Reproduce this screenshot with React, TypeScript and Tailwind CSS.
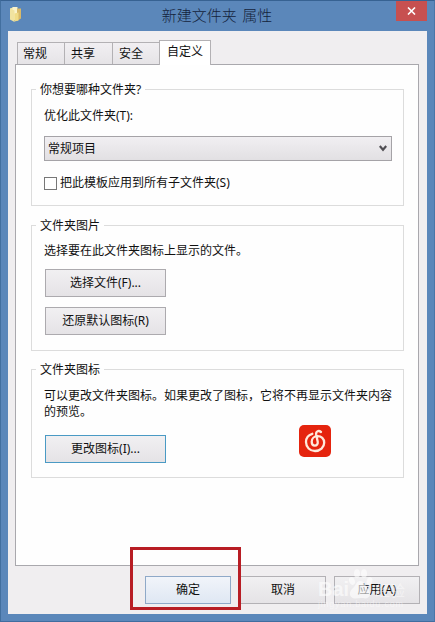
import React, { ReactNode, useState } from "react";

function Group({ title, className, children }: { title: string; className: string; children: ReactNode }) {
  return (
    <fieldset className={`ml-[15px] w-[373px] border border-[#dcdcdc] pl-3 ${className}`}>
      <legend className="-ml-2 h-4 pt-px pr-1 pl-1 leading-4">{title}</legend>
      {children}
    </fieldset>
  );
}

function Button({ children, className }: { children: ReactNode; className: string }) {
  return (
    <button
      type="button"
      className={`flex h-7 shrink-0 items-center justify-center border bg-linear-to-b pb-px ${className}`}
    >
      {children}
    </button>
  );
}

function FolderIcon() {
  return (
    <svg width="14" height="17" viewBox="0 0 14 17">
      <path d="M1 2.5 L4 1.5 L4 14 L1 13 Z" fill="#f5e9a4" />
      <path d="M3.5 1 L8.5 1 L8.5 14 L3.5 14 Z" fill="#faf3cb" />
      <path d="M8 2.5 L12 2.5 L12 12.5 L8 15 Z" fill="#d9b968" />
      <path d="M1 2.5 L5.5 4.5 L5.5 16 L1 13.5 Z" fill="#f1e3a0" />
      <path d="M5.5 7.5 L9.5 6.5 L9.5 14.5 L5.5 15.5 Z" fill="#f0dc88" />
    </svg>
  );
}

function MusicIcon() {
  return (
    <svg className="mt-1.5 ml-[133px]" width="32" height="32" viewBox="0 0 32 32">
      <rect width="32" height="32" rx="5" fill="#e5240e" />
      <path
        d="M13.3 8.8 C9.4 10 7 13.2 7 17 C7 22.2 11 26 16 26 C21.2 26 25.2 22.4 25.2 17.8 C25.2 13.6 22.3 11.2 18.6 11.2 C15.2 11.2 12.7 13.4 12.7 16.8 C12.7 19 13.9 20.6 15.8 20.6 C17.8 20.6 19.1 18.9 18.7 16.8 L17.2 9.8 C16.6 6.6 19.4 4.8 22 7"
        fill="none"
        stroke="#ffe9dc"
        strokeWidth="2.3"
        strokeLinecap="round"
      />
    </svg>
  );
}

function Watermark() {
  return (
    <svg className="pointer-events-none absolute top-[565px] left-[314px]" width="98" height="46" viewBox="0 0 98 46">
      <g fill="#fff" fillOpacity="0.6">
        <text x="3" y="30" fontSize="20" fontWeight="700" fontFamily="Liberation Sans, sans-serif">Bai</text>
        <ellipse cx="37" cy="15" rx="2.8" ry="4" transform="rotate(-20 37 15)" />
        <ellipse cx="42" cy="7.5" rx="3" ry="4.3" />
        <ellipse cx="49" cy="7.5" rx="3" ry="4.3" />
        <ellipse cx="54.5" cy="15" rx="2.8" ry="4" transform="rotate(20 54.5 15)" />
        <path d="M45 15 C41 15 41 20 37 23 C33 27 35 32.5 40 32.5 C43 32.5 47 31.5 50 32.5 C55 32.5 57 27 53 23 C50 20 50 15 45 15 Z" />
      </g>
      <g fill="#fff" fillOpacity="0.45">
        <text x="60" y="30" fontSize="15" fontFamily="Noto Sans CJK SC, sans-serif">经验</text>
        <text x="3" y="41" fontSize="9" textLength="85" fontFamily="Liberation Sans, sans-serif">jingyan.baidu.com</text>
      </g>
    </svg>
  );
}

export default function App() {
  const [applyAll, setApplyAll] = useState(false);

  return (
    <div className="relative flex h-[622px] w-[435px] flex-col overflow-hidden border border-t-[#376292] border-r-[#4a76a8] border-b-[#416d9f] border-l-[#426f9f] bg-[#5b87ba] px-[7px] pb-[7px] font-['Noto_Sans','Noto_Sans_CJK_SC',sans-serif] text-[12px] leading-4 text-[#111]">
      <div className="flex h-[30px] shrink-0 items-start justify-between">
        <div className="w-8 pt-[5px] pl-px">
          <FolderIcon />
        </div>
        <h1 className="pt-[3px] pr-[2px] font-['Noto_Sans_CJK_SC',sans-serif] text-[15px] leading-[21px] font-light text-[#14233a] [word-spacing:2px]">
          新建文件夹 属性
        </h1>
        <button type="button" className="flex h-5 w-[31px] items-center justify-center bg-[#c75050]">
          <svg width="9" height="8" viewBox="0 0 9 8">
            <path d="M1 0.5 L8 7.5 M8 0.5 L1 7.5" stroke="#fff" strokeWidth="1.6" />
          </svg>
        </button>
      </div>

      <div className="flex flex-1 flex-col bg-[#f0eef0] pt-[9px] pl-[7px]">
        <div className="flex h-6 items-end pl-0.5">
          <div className="flex h-[22px] w-12 border border-b-0 border-[#b3b1b4] bg-linear-to-b from-[#f1eff2] to-[#e6e4e7] pt-[3px] pl-[5px]">常规</div>
          <div className="flex h-[22px] w-12 border border-b-0 border-l-0 border-[#b3b1b4] bg-linear-to-b from-[#f1eff2] to-[#e6e4e7] pt-[3px] pl-[6px]">共享</div>
          <div className="flex h-[22px] w-[46px] border border-r-0 border-b-0 border-l-0 border-[#b3b1b4] bg-linear-to-b from-[#f1eff2] to-[#e6e4e7] pt-[3px] pl-[6px]">安全</div>
          <div className="relative z-10 -mb-px flex h-[25px] w-[52px] border border-b-0 border-[#b3b1b4] bg-white pt-[3px] pl-[7px]">自定义</div>
        </div>

        <div className="h-[502px] w-[404px] border border-[#a9a8ad] bg-[#fefefe] pt-4">
          <Group title="你想要哪种文件夹?" className="h-[125px]">
            <p className="pt-[11px]">优化此文件夹(T):</p>
            <div className="mt-3 flex h-[25px] w-[348px] items-center justify-between border border-[#a5a3a7] bg-linear-to-b from-[#f1eff2] to-[#e2e0e3] pr-1 pl-[3px]">
              <span>常规项目</span>
              <svg width="8" height="7" viewBox="0 0 8 7">
                <path d="M0.8 1 L4 4.7 L7.2 1" fill="none" stroke="#504e53" strokeWidth="2.2" />
              </svg>
            </div>
            <label className="mt-[14px] flex h-4 items-center">
              <input
                type="checkbox"
                checked={applyAll}
                onChange={() => setApplyAll(!applyAll)}
                className="h-[13px] w-[13px] appearance-none border border-[#777] bg-white"
              />
              <span className="pl-[3px]">把此模板应用到所有子文件夹(S)</span>
            </label>
          </Group>

          <Group title="文件夹图片" className="mt-[11px] h-[134px]">
            <p className="pt-[10px]">选择要在此文件夹图标上显示的文件。</p>
            <div className="mt-[10px] ml-px flex w-[121px] flex-col gap-[10px]">
              <Button className="border-[#acaaae] from-[#f1f0f2] to-[#e5e3e6]">选择文件(F)...</Button>
              <Button className="border-[#acaaae] from-[#f1f0f2] to-[#e5e3e6]">还原默认图标(R)</Button>
            </div>
          </Group>

          <Group title="文件夹图标" className="mt-[10px] h-[117px]">
            <p className="w-[350px] pt-[11px]">
              可以更改文件夹图标。如果更改了图标，它将不再显示文件夹内容
              <br />
              的预览。
            </p>
            <div className="-mt-px ml-px flex">
              <Button className="mt-4 w-[121px] border-[#4a9ac4] from-[#f1f0f2] to-[#e5e3e6]">更改图标(I)...</Button>
              <MusicIcon />
            </div>
          </Group>
        </div>

        <div className="mt-[10px] ml-[130px] flex">
          <Button className="w-[86px] border-[#8fa9c8] from-[#f1f4fa] to-[#dfe7f3]">确定</Button>
          <Button className="ml-[9px] w-[86px] border-[#b3b1b5] from-[#f1f0f2] to-[#e5e3e6]">取消</Button>
          <Button className="ml-2 w-[86px] border-[#b3b1b5] from-[#f1f0f2] to-[#e5e3e6]">应用(A)</Button>
        </div>
      </div>

      <div className="pointer-events-none absolute top-[546px] left-[129px] h-[63px] w-[111px] border-3 border-[#b81d24]" />
      <Watermark />
    </div>
  );
}
